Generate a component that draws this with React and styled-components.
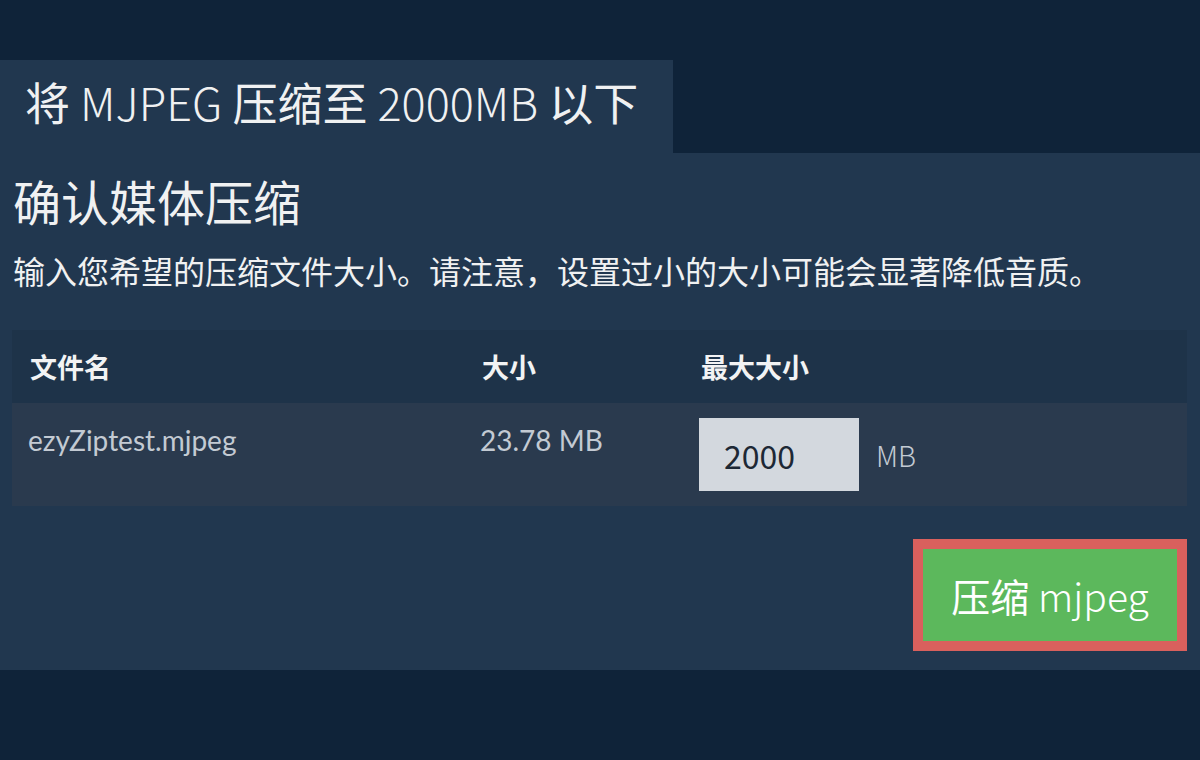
import React from "react";
import styled, { createGlobalStyle } from "styled-components";

const GlobalStyle = createGlobalStyle`
  html, body {
    margin: 0;
    padding: 0;
    background: #0f2339;
  }
  body {
    font-family: "Noto Sans CJK SC", "Noto Sans", sans-serif;
    color: #eef0f2;
  }
`;

const Page = styled.div`
  width: 1200px;
  height: 760px;
  padding-top: 60px;
  box-sizing: border-box;
  background: #0f2339;
`;

const Tab = styled.div`
  display: flex;
  align-items: center;
  width: 673px;
  height: 93px;
  box-sizing: border-box;
  padding: 0 0 10px 25px;
  background: #21374f;
  font-size: 45px;
  color: #f0f1f2;
  white-space: pre;
`;

// latin words in the title and button are set lighter than the CJK
const Light = styled.span`
  font-weight: 300;
`;

const Panel = styled.div`
  display: flex;
  flex-direction: column;
  height: 517px;
  box-sizing: border-box;
  padding: 0 13px 0 12px;
  background: #21374f;
`;

const Heading = styled.h2`
  margin: 15px 0 0 1px;
  font-size: 48px;
  font-weight: 400;
  line-height: 64px;
  color: #f0f1f2;
`;

const Description = styled.p`
  margin: 16px 0 0 1px;
  font-size: 32px;
  line-height: 44px;
  color: #f0f1f2;
`;

const Table = styled.div`
  margin-top: 38px;
  display: flex;
  flex-direction: column;
`;

const Row = styled.div`
  display: grid;
  grid-template-columns: 452px 219px 1fr;
  align-items: ${(p) => (p.$head ? "center" : "start")};
  height: ${(p) => (p.$head ? "73px" : "103px")};
  box-sizing: border-box;
  padding: ${(p) => (p.$head ? "0 18px" : "15px 16px")};
  background: ${(p) => (p.$head ? "#1e3349" : "#2a3a4e")};
`;

const HeadCell = styled.div`
  font-size: 27px;
  font-weight: 700;
  color: #f2f3f4;
`;

const Cell = styled.div`
  padding-top: 7px;
  font-family: Lato, "Noto Sans CJK SC", sans-serif;
  font-size: 28px;
  line-height: 30px;
  color: #c3cad3;
`;

const SizeField = styled.div`
  display: flex;
  align-items: center;
  gap: 17px;
`;

const Input = styled.input`
  width: 160px;
  height: 73px;
  box-sizing: border-box;
  padding: 0 25px;
  border: none;
  outline: none;
  background: #d3d8de;
  font-family: "Noto Sans CJK SC", sans-serif;
  font-size: 32px;
  color: #1d2835;
`;

const Unit = styled.span`
  font-family: "Noto Sans CJK SC", sans-serif;
  font-size: 28px;
  font-weight: 300;
  color: #c3cad3;
`;

const Actions = styled.div`
  display: flex;
  justify-content: flex-end;
  margin-top: 33px;
`;

const CompressButton = styled.button`
  width: 274px;
  height: 112px;
  box-sizing: border-box;
  border: 10px solid #d9605d;
  background: #5cb85c;
  font-family: "Noto Sans CJK SC", sans-serif;
  font-size: 39px;
  color: #ffffff;
  cursor: pointer;
`;

export default function App() {
  return (
    <>
      <GlobalStyle />
      <Page>
        <Tab>
          将 <Light>MJPEG</Light> 压缩至 <Light>2000MB</Light> 以下
        </Tab>
        <Panel>
          <Heading>确认媒体压缩</Heading>
          <Description>
            输入您希望的压缩文件大小。请注意，设置过小的大小可能会显著降低音质。
          </Description>
          <Table>
            <Row $head>
              <HeadCell>文件名</HeadCell>
              <HeadCell>大小</HeadCell>
              <HeadCell>最大大小</HeadCell>
            </Row>
            <Row>
              <Cell>ezyZiptest.mjpeg</Cell>
              <Cell>23.78 MB</Cell>
              <SizeField>
                <Input defaultValue="2000" />
                <Unit>MB</Unit>
              </SizeField>
            </Row>
          </Table>
          <Actions>
            <CompressButton>
              压缩 <Light>mjpeg</Light>
            </CompressButton>
          </Actions>
        </Panel>
      </Page>
    </>
  );
}
